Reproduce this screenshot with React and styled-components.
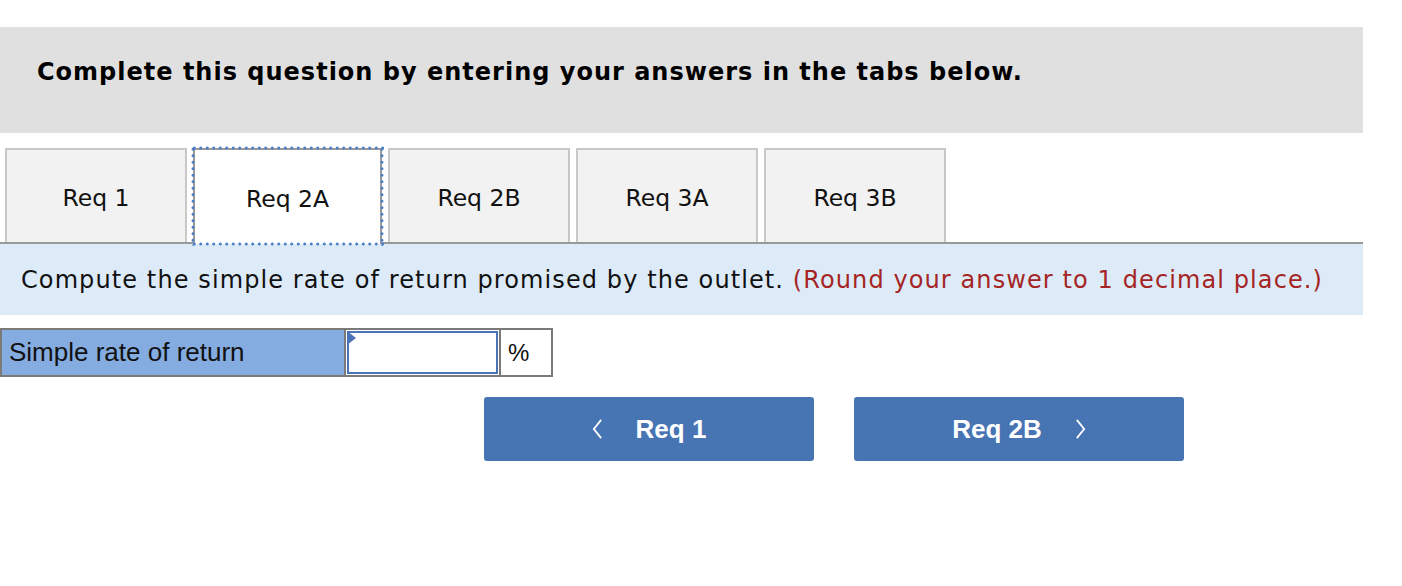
import React, { useState } from "react";
import styled, { createGlobalStyle } from "styled-components";

const GlobalStyle = createGlobalStyle`
  body {
    margin: 0;
    background: #fff;
    font-family: "DejaVu Sans", Verdana, sans-serif;
  }
`;

const tabs = ["Req 1", "Req 2A", "Req 2B", "Req 3A", "Req 3B"];

const App = () => {
  const [active, setActive] = useState(1);
  const [value, setValue] = useState("");

  return (
    <Page>
      <GlobalStyle />
      <Header>
        <Title>Complete this question by entering your answers in the tabs below.</Title>
      </Header>

      <TabBar>
        {tabs.map((t, i) => (
          <Tab key={t} $active={i === active} onClick={() => setActive(i)}>
            {t}
          </Tab>
        ))}
      </TabBar>

      <Instruction>
        Compute the simple rate of return promised by the outlet.{" "}
        <Note>(Round your answer to 1 decimal place.)</Note>
      </Instruction>

      <AnswerRow>
        <LabelCell>Simple rate of return</LabelCell>
        <InputCell>
          <Marker />
          <Input value={value} onChange={(e) => setValue(e.target.value)} />
        </InputCell>
        <UnitCell>%</UnitCell>
      </AnswerRow>

      <NavRow>
        <NavButton>
          <Chevron viewBox="0 0 12 24">
            <polyline points="10,2 2,12 10,22" />
          </Chevron>
          Req 1
        </NavButton>
        <NavButton>
          Req 2B
          <Chevron viewBox="0 0 12 24">
            <polyline points="2,2 10,12 2,22" />
          </Chevron>
        </NavButton>
      </NavRow>
    </Page>
  );
};

const Page = styled.div`
  width: 1363px;
  padding-top: 27px;
  height: 586px;
  box-sizing: border-box;
`;

const Header = styled.div`
  background: #e0e0e0;
  height: 106px;
  display: flex;
  align-items: center;
  padding-left: 37px;
  padding-bottom: 16px;
  box-sizing: border-box;
`;

const Title = styled.h1`
  margin: 0;
  font-size: 24px;
  letter-spacing: 1px;
  font-weight: bold;
  color: #000;
  white-space: nowrap;
`;

const TabBar = styled.div`
  display: flex;
  gap: 6px;
  margin-top: 15px;
  padding-left: 5px;
  border-bottom: 2px solid #999;
  height: 94px;
`;

const Tab = styled.div`
  position: relative;
  width: ${(p) => (p.$active ? "189px" : "182px")};
  height: 94px;
  box-sizing: border-box;
  border: 2px solid #c8c8c8;
  border-bottom: none;
  background: ${(p) => (p.$active ? "#fff" : "#f2f2f2")};
  display: flex;
  align-items: center;
  justify-content: center;
  padding-top: 4px;
  font-size: 23.5px;
  color: #111;
  cursor: pointer;
  ${(p) =>
    p.$active &&
    `
    border-color: #9a9a9a;
    height: 96px;
    margin-bottom: -2px;
    &::before {
      content: "";
      position: absolute;
      left: -4px;
      right: -4px;
      top: -4px;
      bottom: -2px;
      pointer-events: none;
      background:
        radial-gradient(circle, #4f7fc4 1.3px, transparent 1.8px) 0 0 / 6.5px 4px repeat-x,
        radial-gradient(circle, #4f7fc4 1.3px, transparent 1.8px) 0 100% / 6.5px 4px repeat-x,
        radial-gradient(circle, #4f7fc4 1.3px, transparent 1.8px) 0 0 / 4px 6.5px repeat-y,
        radial-gradient(circle, #4f7fc4 1.3px, transparent 1.8px) 100% 0 / 4px 6.5px repeat-y;
    }
  `}
`;

const Instruction = styled.div`
  background: #ddebf8;
  height: 71px;
  display: flex;
  align-items: center;
  padding-left: 21px;
  font-size: 24px;
  letter-spacing: 1.1px;
  color: #111;
  white-space: pre;
`;

const Note = styled.span`
  color: #a52424;
`;

const AnswerRow = styled.div`
  display: flex;
  margin-top: 13px;
  height: 49px;
`;

const LabelCell = styled.div`
  width: 346px;
  box-sizing: border-box;
  background: #84ace0;
  border: 2px solid #7a7a7a;
  display: flex;
  align-items: center;
  padding-left: 7px;
  font-family: "Liberation Sans", Arial, sans-serif;
  font-size: 26px;
  color: #111;
`;

const InputCell = styled.div`
  position: relative;
  width: 153px;
  box-sizing: border-box;
  border-top: 2px solid #7a7a7a;
  border-bottom: 2px solid #7a7a7a;
  padding: 1px;
  background: #fff;
`;

const Marker = styled.span`
  position: absolute;
  left: 1px;
  top: 1px;
  width: 0;
  height: 0;
  border-top: 7px solid transparent;
  border-bottom: 7px solid transparent;
  border-left: 9px solid #4a74b5;
`;

const Input = styled.input`
  width: 100%;
  height: 100%;
  box-sizing: border-box;
  border: 2px solid #4a74b5;
  outline: none;
  font-size: 20px;
  padding: 0 10px;
`;

const UnitCell = styled.div`
  width: 54px;
  box-sizing: border-box;
  border: 2px solid #7a7a7a;
  display: flex;
  align-items: center;
  padding-left: 7px;
  font-family: "Liberation Sans", Arial, sans-serif;
  font-size: 24px;
  color: #111;
`;

const NavRow = styled.div`
  display: flex;
  gap: 40px;
  margin-top: 20px;
  padding-left: 484px;
`;

const NavButton = styled.button`
  width: 330px;
  height: 64px;
  border: none;
  border-radius: 3px;
  background: #4774b3;
  color: #fff;
  font-family: "Liberation Sans", Arial, sans-serif;
  font-weight: bold;
  font-size: 26px;
  display: flex;
  align-items: center;
  justify-content: center;
  gap: 33px;
  cursor: pointer;
`;

const Chevron = styled.svg`
  width: 11px;
  height: 24px;
  fill: none;
  stroke: #fff;
  stroke-width: 2;
`;

export default App;
